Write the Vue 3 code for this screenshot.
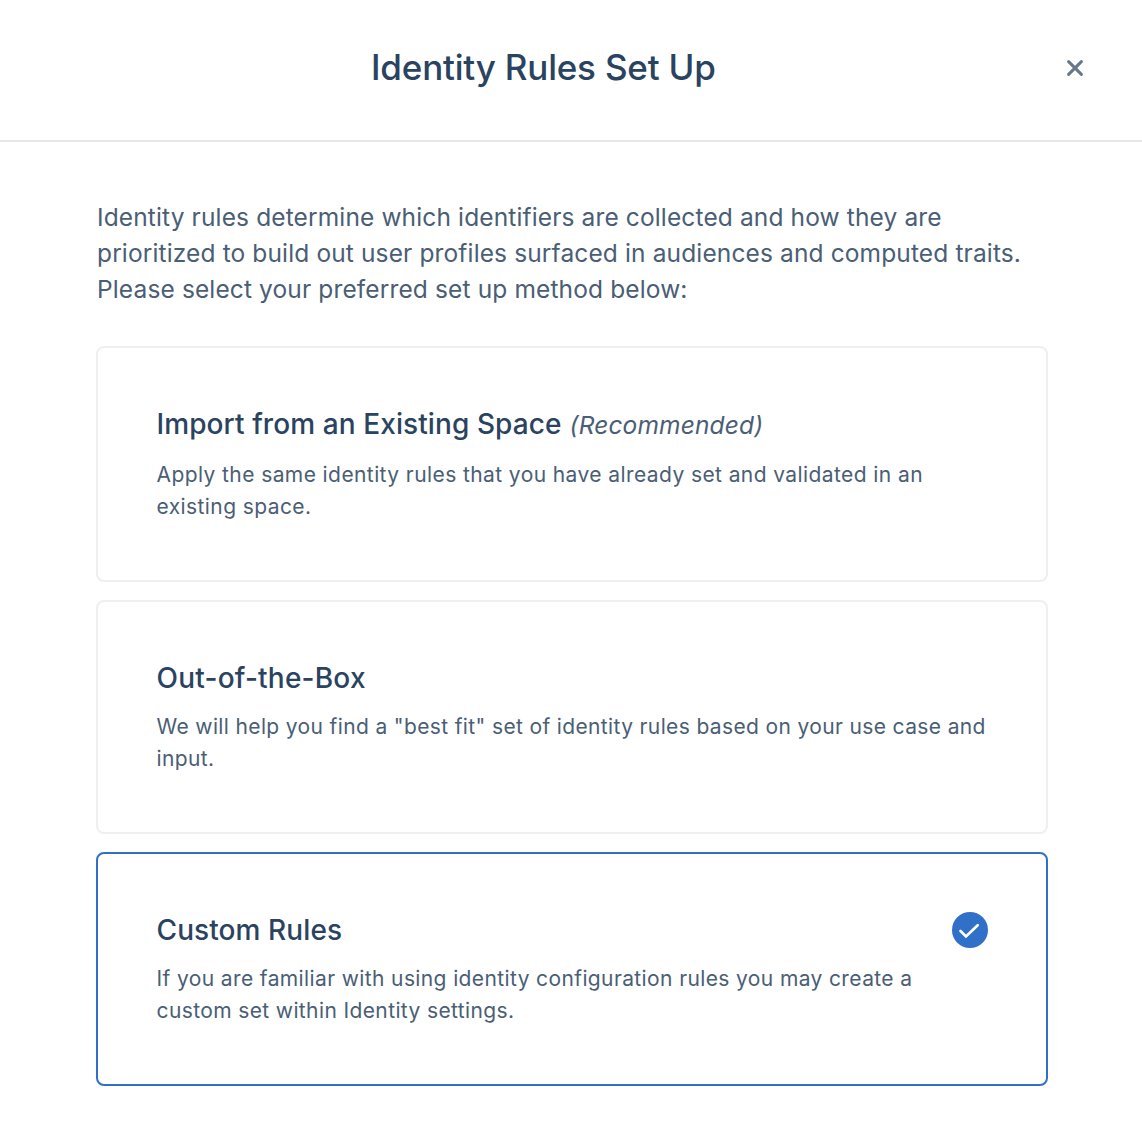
<script setup>
const options = [
  { id: 'import', title: 'Import from an Existing Space', note: '(Recommended)', lines: ['Apply the same identity rules that you have already set and validated in an', 'existing space.'] },
  { id: 'box', title: 'Out-of-the-Box', lines: ['We will help you find a "best fit" set of identity rules based on your use case and', 'input.'] },
  { id: 'custom', title: 'Custom Rules', selected: true, lines: ['If you are familiar with using identity configuration rules you may create a', 'custom set within Identity settings.'] },
]
</script>

<template>
  <div class="dialog">
    <header class="header">
      <h1>Identity Rules Set Up</h1>
      <button class="close" aria-label="Close">
        <svg width="18" height="18" viewBox="0 0 18 18"><path d="M2.6 2.6L15.4 15.4M15.4 2.6L2.6 15.4" fill="none" stroke="#66788a" stroke-width="3" stroke-linecap="round" /></svg>
      </button>
    </header>
    <main>
      <p class="intro">
        <span>Identity rules determine which identifiers are collected and how they are</span>
        <span>prioritized to build out user profiles surfaced in audiences and computed traits.</span>
        <span>Please select your preferred set up method below:</span>
      </p>
      <div class="cards">
        <section v-for="o in options" :key="o.id" class="card" :class="[o.id, { selected: o.selected }]">
          <div class="row">
            <h2>{{ o.title }}</h2>
            <em v-if="o.note">{{ o.note }}</em>
            <svg v-if="o.selected" class="check" width="36" height="36" viewBox="0 0 36 36">
              <circle cx="18" cy="18" r="18" fill="#3070c8" />
              <path d="M8.5 19L14 24.5L25.7 13.2" fill="none" stroke="#fff" stroke-width="2.6" stroke-linecap="round" />
            </svg>
          </div>
          <p class="desc"><span v-for="l in o.lines" :key="l">{{ l }}</span></p>
        </section>
      </div>
    </main>
  </div>
</template>

<style>
body { margin: 0; background: #fff; }
</style>

<style scoped>
.dialog { width: 1142px; height: 1122px; overflow: hidden; background: #fff; font-family: Inter, sans-serif; color: #4a5e75; }
.header { height: 142px; box-sizing: border-box; border-bottom: 2px solid #e5e7eb; display: flex; padding: 44px 57px 0 371px; justify-content: space-between; align-items: flex-start; }
h1, h2, p { margin: 0; font-weight: 500; }
h1 { font-size: 35px; line-height: 47px; letter-spacing: -0.2px; color: #2a4360; white-space: nowrap; }
.close { border: 0; padding: 0; background: none; width: 20px; height: 48px; display: flex; align-items: center; justify-content: center; }
main { padding: 57px 94px 0 96px; }
.intro { padding-left: 1px; font-size: 24.5px; line-height: 36px; font-weight: 400; letter-spacing: 0.13px; }
p span { display: block; white-space: nowrap; }
.cards { margin-top: 39px; display: flex; flex-direction: column; gap: 18px; }
.card { box-sizing: border-box; height: 234px; border: 2px solid #efeff1; border-radius: 8px; padding: 56px 58px 0 58.5px; }
.import { height: 236px; }
.selected { border-color: #3070c8; }
.row { display: flex; align-items: center; height: 40px; }
h2 { font-size: 28px; line-height: 40px; letter-spacing: 0.09px; color: #2a4360; white-space: nowrap; }
.box h2 { letter-spacing: 0.22px; }
em { font-size: 24.5px; margin-left: 8px; line-height: 40px; padding-top: 2px; letter-spacing: 0.15px; white-space: nowrap; }
.check { margin-left: auto; }
.desc { margin-top: 13px; font-size: 21px; line-height: 32px; font-weight: 400; letter-spacing: 0.38px; }
.import .desc { margin-top: 15px; letter-spacing: 0.41px; }
.box .desc { letter-spacing: 0.36px; }
</style>
